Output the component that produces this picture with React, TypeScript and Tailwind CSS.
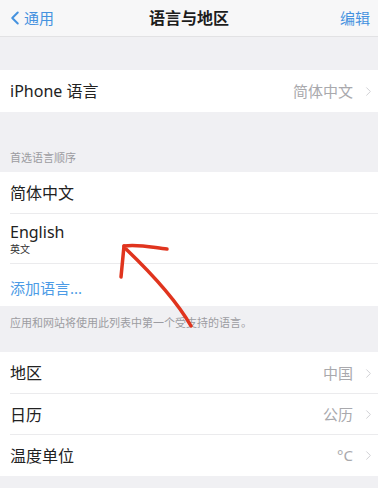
import { ChevronLeft, ChevronRight } from "lucide-react"

const font = { fontFamily: '"Noto Sans", "Noto Sans CJK SC", sans-serif' }

function Row({
  label,
  value,
  className = "",
  divider = false,
}: {
  label: string
  value?: string
  className?: string
  divider?: boolean
}) {
  return (
    <div className={`relative flex items-center bg-white pl-[10px] pr-[2px] ${className}`}>
      <span className="text-[16px] text-[#222] flex-1">{label}</span>
      {value && <span className="text-[15px] text-[#a9a9ad] mr-[8px]">{value}</span>}
      {value && <ChevronRight size={15} strokeWidth={1.5} className="text-[#cdcdd1]" />}
      {divider && <div className="absolute bottom-0 left-[10px] right-0 h-px bg-[#ebebed]" />}
    </div>
  )
}

export default function App() {
  return (
    <div className="relative w-[378px] h-[488px] overflow-hidden bg-[#f0f0f3]" style={font}>
      {/* nav */}
      <div className="h-[37px] flex items-center bg-[#f7f7f8] border-b border-[#e2e2e4] px-[4px]">
        <div className="flex items-center w-[100px] text-[#4592df]">
          <ChevronLeft size={22} strokeWidth={2.2} />
          <span className="text-[15px] -ml-[2px]">通用</span>
        </div>
        <div className="flex-1 text-center text-[16px] font-semibold text-[#1d1d1d]">语言与地区</div>
        <div className="w-[100px] text-right pr-[4px] text-[15px] text-[#4592df]">编辑</div>
      </div>

      <div className="h-[33px]" />
      <Row label="iPhone 语言" value="简体中文" className="h-[42px]" />

      <div className="h-[60px] flex items-end pl-[10px] pb-[6px] text-[11px] text-[#9c9ca1]">首选语言顺序</div>

      <Row label="简体中文" className="h-[42px]" divider />
      <div className="relative bg-white pl-[10px] h-[50px] flex flex-col justify-center">
        <span className="text-[16px] leading-[20px] text-[#222]">English</span>
        <span className="text-[10px] leading-[14px] text-[#333]">英文</span>
        <div className="absolute bottom-0 left-[10px] right-0 h-px bg-[#ebebed]" />
      </div>
      <div className="bg-white h-[42px] pt-[6px] flex items-center pl-[10px] text-[15px] text-[#4c9be6]">添加语言...</div>

      <div className="h-[46px] pl-[10px] pt-[9px] text-[11px] text-[#9c9ca1]">
        应用和网站将使用此列表中第一个受支持的语言。
      </div>

      <Row label="地区" value="中国" className="h-[42px]" divider />
      <Row label="日历" value="公历" className="h-[41px]" divider />
      <Row label="温度单位" value="°C" className="h-[41px]" />

      {/* red hand-drawn arrow */}
      <svg className="absolute left-0 top-0 pointer-events-none" width="378" height="488">
        <g fill="none" stroke="#e0341e" strokeWidth="3.5" strokeLinecap="round" strokeLinejoin="round">
          <path d="M124 246 C 140 244, 155 248, 167 249" />
          <path d="M124 246 C 123 256, 122 266, 121 277" />
          <path d="M126 249 C 150 272, 175 298, 191 326" />
        </g>
      </svg>
    </div>
  )
}
